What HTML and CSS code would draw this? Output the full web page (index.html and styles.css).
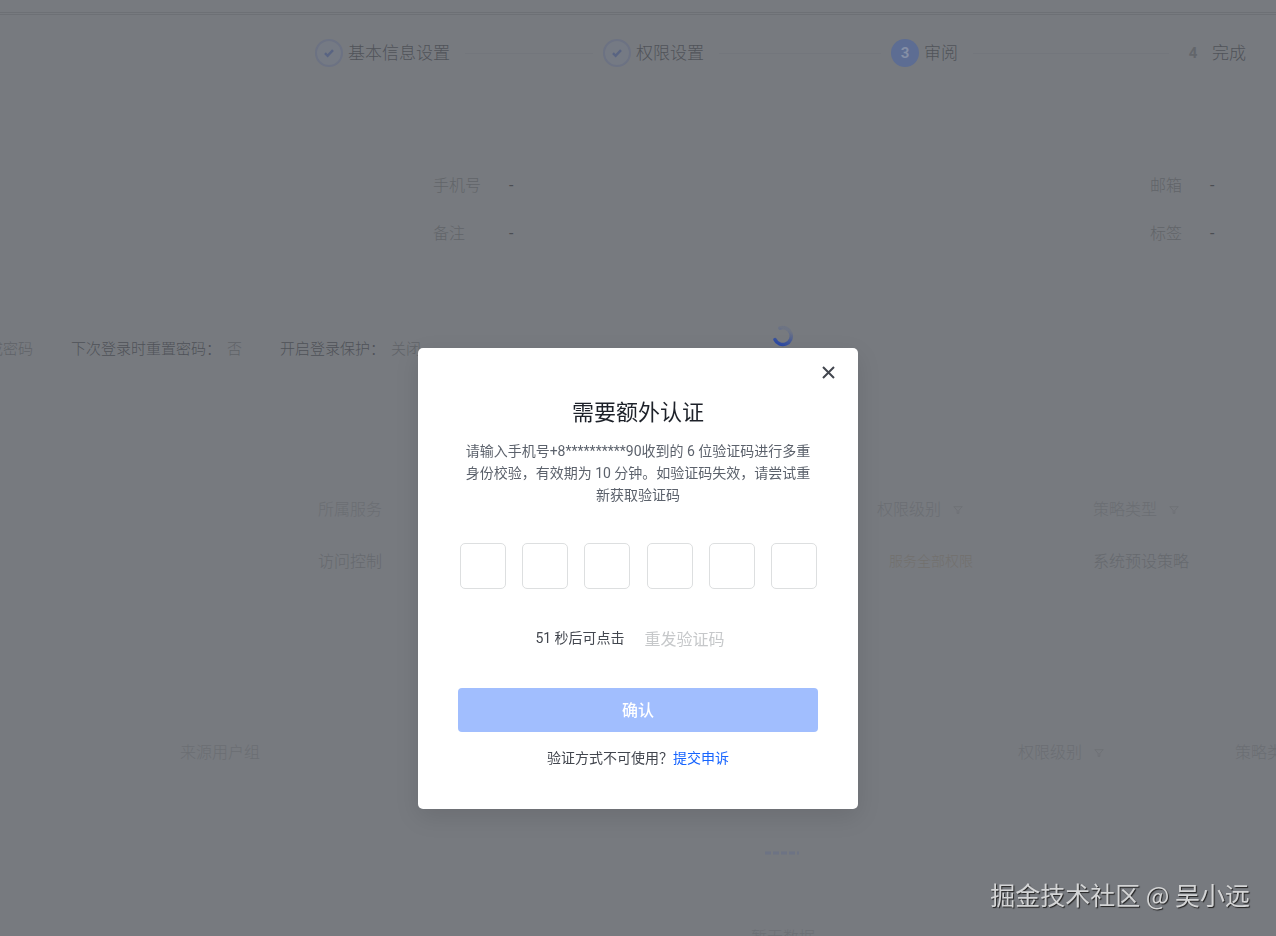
FILE: index.html
```
<!DOCTYPE html>
<html lang="zh-CN">
<head>
    <meta charset="UTF-8">
    <meta name="viewport" content="width=device-width, initial-scale=1.0">
    <title>需要额外认证</title>
    <link rel="stylesheet" href="styles.css">
</head>
<body>
    <div class="page">
        <header class="topbar"></header>

        <ol class="steps">
            <li class="step">
                <span class="step-icon done">
                    <svg width="12" height="12" viewBox="0 0 12 12"><path d="M2 6.2 4.6 8.8 10 3.2" fill="none" stroke="currentColor" stroke-width="2.4"/></svg>
                </span>
                <span>基本信息设置</span>
                <span class="step-line"></span>
            </li>
            <li class="step">
                <span class="step-icon done">
                    <svg width="12" height="12" viewBox="0 0 12 12"><path d="M2 6.2 4.6 8.8 10 3.2" fill="none" stroke="currentColor" stroke-width="2.4"/></svg>
                </span>
                <span>权限设置</span>
                <span class="step-line"></span>
            </li>
            <li class="step">
                <span class="step-icon active">3</span>
                <span>审阅</span>
                <span class="step-line"></span>
            </li>
            <li class="step last">
                <span class="step-icon">4</span>
                <span>完成</span>
            </li>
        </ol>

        <dl class="info">
            <dt>手机号</dt><dd>-</dd>
            <dt>邮箱</dt><dd>-</dd>
            <dt>备注</dt><dd>-</dd>
            <dt>标签</dt><dd>-</dd>
        </dl>

        <div class="login-settings">
            <div class="setting"><span class="setting-value">自动生成密码</span></div>
            <div class="setting">下次登录时重置密码：<span class="setting-value">否</span></div>
            <div class="setting">开启登录保护：<span class="setting-value">关闭</span></div>
        </div>

        <table class="list policies">
            <colgroup><col class="col-service"><col class="col-level"><col></colgroup>
            <thead>
                <tr>
                    <th>所属服务</th>
                    <th>权限级别 <svg class="filter" width="10" height="10" viewBox="0 0 12 12"><path d="M1 2h10L7 6.500V10H5V6.500z" fill="none" stroke="currentColor"/></svg></th>
                    <th>策略类型 <svg class="filter" width="10" height="10" viewBox="0 0 12 12"><path d="M1 2h10L7 6.500V10H5V6.500z" fill="none" stroke="currentColor"/></svg></th>
                </tr>
            </thead>
            <tbody>
                <tr>
                    <td>访问控制</td>
                    <td><span class="tag">服务全部权限</span></td>
                    <td>系统预设策略</td>
                </tr>
            </tbody>
        </table>

        <table class="list groups">
            <colgroup><col class="col-group"><col class="col-group-level"><col></colgroup>
            <thead>
                <tr>
                    <th>来源用户组</th>
                    <th>权限级别 <svg class="filter" width="10" height="10" viewBox="0 0 12 12"><path d="M1 2h10L7 6.500V10H5V6.500z" fill="none" stroke="currentColor"/></svg></th>
                    <th>策略类型</th>
                </tr>
            </thead>
        </table>

        <div class="empty">
            <svg width="64" height="70" viewBox="0 0 64 70"><path d="M14 3h34" stroke="#6d7384" stroke-width="3" stroke-dasharray="6 2"/></svg>
            <div>暂无数据</div>
        </div>
    </div>

    <div class="mask">
        <svg class="spinner" width="22" height="22" viewBox="0 0 22 22">
            <defs>
                <linearGradient id="spin" x1="0" y1="1" x2="0.4" y2="0">
                    <stop offset="0" stop-color="#2444a8"/>
                    <stop offset="1" stop-color="#2444a8" stop-opacity="0.1"/>
                </linearGradient>
            </defs>
            <path d="M3 14.500A8.500 8.500 0 1 0 8 3" fill="none" stroke="url(#spin)" stroke-width="3.500" stroke-linecap="round"/>
        </svg>

        <form class="modal" role="dialog" aria-labelledby="title">
            <button class="close" type="button" aria-label="关闭">
                <svg width="13" height="13" viewBox="0 0 13 13"><path d="M1 1l11 11M12 1L1 12" stroke="currentColor" stroke-width="2"/></svg>
            </button>
            <h1 class="title" id="title">需要额外认证</h1>
            <p class="desc">请输入手机号+8**********90收到的 6 位验证码进行多重<br>身份校验，有效期为 10 分钟。如验证码失效，请尝试重<br>新获取验证码</p>
            <div class="code">
                <input type="text" maxlength="1" inputmode="numeric" aria-label="1">
                <input type="text" maxlength="1" inputmode="numeric" aria-label="2">
                <input type="text" maxlength="1" inputmode="numeric" aria-label="3">
                <input type="text" maxlength="1" inputmode="numeric" aria-label="4">
                <input type="text" maxlength="1" inputmode="numeric" aria-label="5">
                <input type="text" maxlength="1" inputmode="numeric" aria-label="6">
            </div>
            <div class="resend">
                <span>51 秒后可点击</span>
                <button class="resend-btn" type="button" disabled>重发验证码</button>
            </div>
            <button class="confirm" type="submit" disabled>确认</button>
            <div class="appeal">验证方式不可使用？<a href="#">提交申诉</a></div>
        </form>
    </div>

    <div class="watermark">掘金技术社区 @ 吴小远</div>
</body>
</html>
```
FILE: styles.css
```
* {
    box-sizing: border-box;
}
body {
    margin: 0;
    background-color: #777a7f;
    color: #565a60;
    font-family: Roboto, "Noto Sans CJK SC", sans-serif;
    font-size: 16px;
    font-weight: 300;
}
button, input {
    font-family: inherit;
}
.page {
    height: 100vh;
    overflow: hidden;
}
.topbar {
    height: 15px;
    border-bottom: 3px double #6d7075;
}

/* steps */
.steps {
    display: flex;
    list-style: none;
    margin: 0;
    padding: 24px 30px 0 315px;
    font-size: 17px;
    line-height: 28px;
    color: #505359;
}
.step {
    display: flex;
    flex: 1;
    align-items: center;
    gap: 5px;
    white-space: nowrap;
}
.step.last {
    flex: none;
}
.step-icon {
    display: flex;
    align-items: center;
    justify-content: center;
    width: 28px;
    height: 28px;
    border-radius: 50%;
    font-size: 15px;
    font-weight: 700;
    color: #63666b;
}
.step-icon.done {
    border: 2px solid #6c7283;
    background-color: #757a84;
    color: #596482;
}
.step-icon.active {
    background-color: #5d6d93;
    color: #858fa6;
}
.step-line {
    flex: 1;
    height: 1px;
    margin: 0 10px;
    background-color: #73767c;
}

/* user info */
.info {
    display: grid;
    grid-template-columns: 76px 1fr 60px 66px;
    margin: 95px 0 0;
    padding-left: 433px;
    line-height: 48px;
    color: #626569;
}
.info dd {
    margin: 0;
    color: #4b4e53;
    font-weight: 400;
}
.login-settings {
    display: flex;
    gap: 38px;
    margin: 79px 0 0 -57px;
    font-size: 15px;
    line-height: 24px;
    color: #4f5258;
    white-space: nowrap;
}
.setting-value {
    margin-left: 6px;
    color: #606368;
}
.setting:first-child .setting-value {
    margin-left: 0;
}

/* tables */
.list {
    width: 100%;
    table-layout: fixed;
    border-collapse: collapse;
    text-align: left;
    white-space: nowrap;
    color: #66696e;
}
.list th, .list td {
    height: 52px;
    padding: 0;
    font-weight: 300;
}
.list th {
    color: #6b6e73;
}
.policies {
    width: calc(100% - 318px);
    margin: 121px 0 0 318px;
}
.col-service {
    width: 559px;
}
.col-level {
    width: 216px;
}
.groups {
    width: calc(100% - 180px);
    margin: 139px 0 0 180px;
}
.col-group {
    width: 838px;
}
.col-group-level {
    width: 217px;
}
.filter {
    margin-left: 8px;
    color: #6d7075;
}
.tag {
    margin-left: 12px;
    font-size: 14px;
    color: #72706d;
}
.empty {
    margin: 73px 0 0 290px;
    text-align: center;
    color: #6d7075;
}

/* verification dialog */
.mask {
    position: fixed;
    inset: 0;
    display: flex;
    flex-direction: column;
    align-items: center;
    padding-top: 348px;
}
.spinner {
    position: absolute;
    left: calc(50% + 134px);
    top: 325px;
}
.modal {
    position: relative;
    width: 440px;
    padding: 49px 40px 40px;
    border-radius: 5px;
    background-color: #fff;
    box-shadow: 0 8px 24px rgba(0, 0, 0, 0.1);
    text-align: center;
    font-size: 14px;
    line-height: 22px;
    color: #42464e;
}
.close {
    position: absolute;
    top: 14px;
    right: 19px;
    display: flex;
    align-items: center;
    justify-content: center;
    width: 21px;
    height: 21px;
    padding: 0;
    border: 0;
    background: none;
    color: #42464e;
}
.title {
    margin: 0 0 11px;
    font-size: 22px;
    font-weight: 400;
    line-height: 32px;
    color: #1d2129;
}
.desc {
    margin: 0;
    font-weight: 400;
    color: #5c626c;
    white-space: nowrap;
}
.code {
    display: flex;
    justify-content: space-between;
    margin: 37px 1px 37px 2px;
}
.code input {
    width: 46px;
    height: 46px;
    padding: 0;
    border: 1px solid #dddfe0;
    border-radius: 5px;
    text-align: center;
    font-size: 22px;
}
.resend {
    display: flex;
    justify-content: center;
    align-items: center;
    gap: 20px;
    height: 24px;
    margin-bottom: 38px;
    padding-right: 16px;
    font-weight: 400;
}
.resend-btn {
    padding: 0;
    border: 0;
    background: none;
    font-size: 16px;
    color: #c6c8ca;
}
.confirm {
    display: block;
    width: 100%;
    height: 44px;
    margin-bottom: 15px;
    padding: 0 0 2px;
    border: 0;
    border-radius: 4px;
    background-color: #a1befe;
    color: #fff;
    font-size: 16px;
    font-weight: 500;
}
.appeal {
    font-weight: 400;
}
.appeal a {
    color: #1664ff;
    text-decoration: none;
}

.watermark {
    position: fixed;
    right: 26px;
    bottom: 24px;
    font-family: "Noto Sans CJK SC", sans-serif;
    font-size: 25px;
    font-weight: 400;
    line-height: 36px;
    color: #d4d5d6;
    text-shadow: 1px 1px 1px #222;
}
```
